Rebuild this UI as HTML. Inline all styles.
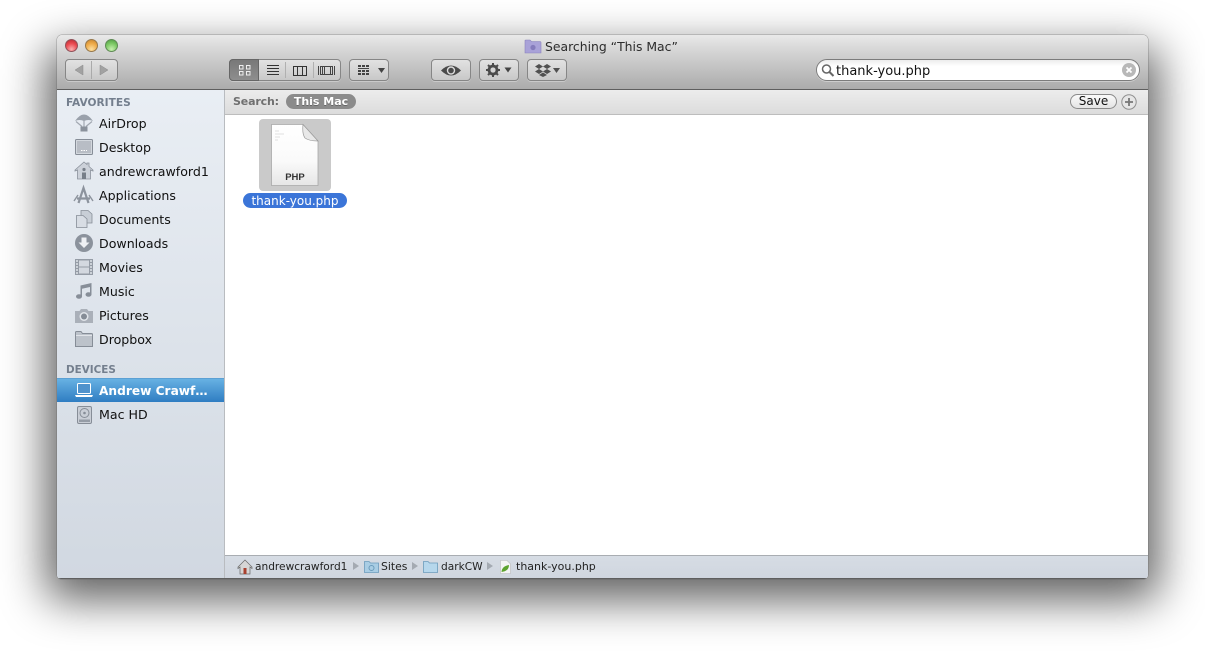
<!DOCTYPE html>
<html><head><meta charset="utf-8">
<style>
*{box-sizing:border-box}
html,body{margin:0;padding:0;width:1205px;height:657px;overflow:hidden;background:#fff;font-family:"DejaVu Sans","Liberation Sans",sans-serif;color:#111}
.a{position:absolute}
#shadow{left:46px;top:48px;width:1113px;height:552px;border-radius:14px;background:rgba(0,0,0,.62);filter:blur(22px)}
#win{left:57px;top:35px;width:1091px;height:544px;border-radius:5px 5px 4px 4px;overflow:hidden;background:#fff;box-shadow:0 0 0 .5px rgba(90,90,90,.5)}
#tb{left:0;top:0;width:1091px;height:55px;background:linear-gradient(#e9e9e9,#d8d8d8 25%,#b4b4b4 85%,#acacac);border-bottom:1px solid #5e5e5e}
#side{left:0;top:55px;width:168px;height:489px;background:linear-gradient(#e9eef4,#d1d8e1);border-right:1px solid #b9bcc0}
#sb{left:168px;top:55px;width:923px;height:25px;background:linear-gradient(#ececec,#dcdcdc);border-bottom:1px solid #bdbdbd}
#status{left:168px;top:520px;width:923px;height:24px;background:linear-gradient(#d6dce4,#d0d6df);border-top:1px solid #a9adb2}
.dot{width:13px;height:13px;border-radius:50%;top:4px}
.btn{height:22px;top:24px;border:1px solid #868686;border-radius:4px;background:linear-gradient(#e2e2e2,#c8c8c8);box-shadow:0 1px 0 rgba(255,255,255,.3)}
.it{left:42px;font-size:12.6px;line-height:16px;white-space:nowrap;color:#111}
.h{left:9px;font-weight:bold;color:#747f8e;line-height:14px;white-space:nowrap}
svg{position:absolute;overflow:visible}
.st{font-size:11px;line-height:14px;top:525px;white-space:nowrap;color:#222}
</style></head><body>
<div class="a" id="shadow"></div>
<div class="a" id="win">
<div class="a" id="tb"></div>
<div class="a" id="side"></div>
<div class="a" id="sb"></div>
<div class="a" id="status"></div>
<div class="a" style="left:0;top:543px;width:1091px;height:1px;background:#5f5f5f"></div>

<div class="a dot" style="left:8px;background:radial-gradient(circle at 50% 85%,#fbb0b0,#ea4a50 55%,#b52a30);border:1px solid #90525a"></div>
<div class="a dot" style="left:28px;background:radial-gradient(circle at 50% 85%,#fde0a0,#eeaa48 55%,#c4822c);border:1px solid #96784c"></div>
<div class="a dot" style="left:48px;background:radial-gradient(circle at 50% 85%,#c8f0b0,#7cc864 55%,#4c9a40);border:1px solid #5f8a55"></div>

<svg style="left:468px;top:4px" width="16" height="14"><path d="M0 3V1.500Q0 1 1 1H5L6.500 2.500H15Q16 2.500 16 3.500V14H0Z" fill="#a9a2d8" stroke="#8a82bc" stroke-width=".6"/><circle cx="8" cy="8.500" r="2.600" fill="#857cbc"/></svg>
<div class="a" style="left:488px;top:4px;font-size:12.4px;line-height:16px;color:#2c2c2c;white-space:nowrap">Searching “This Mac”</div>

<!-- back/forward -->
<div class="a btn" style="left:8px;width:53px"></div>
<div class="a" style="left:34px;top:26px;width:1px;height:18px;background:#aaa"></div>
<svg style="left:17px;top:30px" width="40" height="11"><path d="M9 0V10L1 5Z M26 0V10L34 5Z" fill="#a2a2a2" stroke="#8c8c8c" stroke-width=".5"/></svg>

<!-- view switch -->
<div class="a btn" style="left:172px;width:112px"></div>
<div class="a" style="left:172px;top:24px;width:30px;height:22px;border-radius:4px 0 0 4px;background:linear-gradient(#787878,#8e8e8e);border:1px solid #666"></div>
<div class="a" style="left:228px;top:27px;width:1px;height:16px;background:#b0b0b0"></div>
<div class="a" style="left:256px;top:27px;width:1px;height:16px;background:#b0b0b0"></div>
<svg style="left:182px;top:30px" width="90" height="13" fill="none" stroke="#333">
 <g stroke="#eee"><rect x=".5" y=".5" width="3.500" height="3.500"/><rect x="7.500" y=".5" width="3.500" height="3.500"/><rect x=".5" y="6.500" width="3.500" height="3.500"/><rect x="7.500" y="6.500" width="3.500" height="3.500"/></g>
 <path d="M28 .5H40M28 3.500H40M28 6.500H40M28 9.500H40"/>
 <path d="M54.500 1.500H67.500V10.500H54.500ZM58.500 1.500V10.500M63.500 1.500V10.500"/>
 <path d="M81.500 1.500H93.500V9.500H81.500Z M79.500 1V10 M95.500 1V10 M83.500 2V9 M85.500 2V9 M91.500 2V9" stroke="#444"/>
</svg>

<!-- arrange -->
<div class="a btn" style="left:292px;width:40px"></div>
<svg style="left:301px;top:30px" width="26" height="11" fill="#444"><path d="M0 0h3v2H0zM4 0h3v2H4zM8 0h3v2H8z M0 3h11v1H0z M0 5h3v2H0zM4 5h3v2H4zM8 5h3v2H8z M0 8h3v2H0zM4 8h3v2H4zM8 8h3v2H8z"/><path d="M20 3h7L23.500 8z"/></svg>

<!-- quick look -->
<div class="a btn" style="left:374px;width:40px"></div>
<svg style="left:384px;top:29px" width="20" height="13"><path d="M0 6.500Q10 -3.500 20 6.500Q10 16.500 0 6.500Z" fill="#4a4a4a"/><circle cx="10" cy="6.500" r="4.200" fill="#dcdcdc"/><circle cx="10" cy="6.500" r="2.800" fill="#4a4a4a"/></svg>

<!-- gear -->
<div class="a btn" style="left:422px;width:40px"></div>
<svg style="left:429px;top:28px" width="32" height="14"><circle cx="7" cy="7" r="4.200" fill="none" stroke="#4a4a4a" stroke-width="2.400"/><path d="M7 0V14M0 7H14M2 2L12 12M12 2L2 12" stroke="#4a4a4a" stroke-width="2"/><circle cx="7" cy="7" r="2.600" fill="#d4d4d4"/><path d="M18.500 4.500h7L22 9.500z" fill="#444"/></svg>

<!-- dropbox -->
<div class="a btn" style="left:470px;width:40px"></div>
<svg style="left:478px;top:29px" width="30" height="13" fill="#505050"><path d="M4 0L8 2.500 4 5 0 2.500ZM12 0L16 2.500 12 5 8 2.500ZM4 5L8 7.500 4 10 0 7.500ZM12 5L16 7.500 12 10 8 7.500ZM8 8.500L12 11 8 13 4 11Z"/><path d="M18 4h7L21.500 9z"/></svg>

<!-- search -->
<div class="a" style="left:759px;top:24px;width:324px;height:22px;border-radius:11px;background:linear-gradient(#ececec,#fff 30%);border:1px solid #7c7c7c;box-shadow:0 1px 0 rgba(255,255,255,.35)"></div>
<svg style="left:764px;top:29px" width="14" height="14" fill="none" stroke="#666" stroke-width="1.500"><circle cx="5.500" cy="5" r="4"/><path d="M8.500 8L12.500 12" stroke-width="2"/></svg>
<div class="a" style="left:779px;top:28px;font-size:13px;line-height:16px;color:#111;white-space:nowrap;margin-top:1px">thank-you.php</div>
<svg style="left:1065px;top:28px" width="14" height="14"><circle cx="7" cy="7" r="7" fill="#b8b8b8"/><path d="M4.500 4.500L9.500 9.500M9.500 4.500L4.500 9.500" stroke="#fff" stroke-width="1.800"/></svg>

<!-- sidebar -->
<div class="a h" style="top:61px;font-size:10.6px">FAVORITES</div>
<div class="a it" style="top:81px">AirDrop</div>
<div class="a it" style="top:105px">Desktop</div>
<div class="a it" style="top:129px">andrewcrawford1</div>
<div class="a it" style="top:153px">Applications</div>
<div class="a it" style="top:177px">Documents</div>
<div class="a it" style="top:201px">Downloads</div>
<div class="a it" style="top:225px">Movies</div>
<div class="a it" style="top:249px">Music</div>
<div class="a it" style="top:273px">Pictures</div>
<div class="a it" style="top:297px">Dropbox</div>
<div class="a h" style="top:328px;font-size:10.4px">DEVICES</div>
<div class="a" style="left:0;top:343px;width:167px;height:24px;background:linear-gradient(#67b1e3,#2f7dc2);border-top:1px solid #5ba0d4"></div>
<div class="a it" style="top:348px;color:#fff;font-weight:bold;font-size:12.2px">Andrew Crawf…</div>
<div class="a it" style="top:372px">Mac HD</div>

<!-- sidebar icons -->
<svg style="left:18px;top:79px" width="18" height="18"><path d="M0 7Q9 -6 18 7Q13.500 5 9 7Q4.500 5 0 7Z" fill="#9aa1ab"/><path d="M1 7.500L7 12.500M17 7.500L11 12.500M9 7V12.500" stroke="#a2a8b1" stroke-width="1.200"/><rect x="5.500" y="12.500" width="7" height="5" fill="#8b929c"/></svg>
<svg style="left:18px;top:104px" width="18" height="16"><rect x=".5" y=".5" width="17" height="15" rx="1" fill="#d3d8de" stroke="#868d97"/><rect x="2" y="2" width="14" height="12" fill="#b8bdc5"/><path d="M6 11.500h6" stroke="#fff" stroke-dasharray="1.500 1"/></svg>
<svg style="left:18px;top:127px" width="18" height="17"><path d="M0 8L9 0 12 2.500V1H14V4.500L18 8V9L15.500 8V17H2.500V8L0 9Z" fill="#ccd1d9" stroke="#8a919b" stroke-width=".8"/><circle cx="9" cy="7.500" r="1.600" fill="#777e88"/><rect x="7" y="10.500" width="4" height="6.500" fill="#777e88"/></svg>
<svg style="left:17px;top:151px" width="19" height="18" fill="none" stroke="#8c939d" stroke-width="2.200"><path d="M4.500 17L9.500 2 14.500 17M3 12.500H16"/><path d="M0 15L4 9M19 15L15 9" stroke-width="1.400"/></svg>
<svg style="left:19px;top:175px" width="17" height="18"><path d="M5 .5H12L16 4V13H5Z" fill="#c8ced6" stroke="#868d97" stroke-width=".8"/><path d="M.5 5.500H7L11 9V17.500H.5Z" fill="#d8dde4" stroke="#868d97" stroke-width=".8"/></svg>
<svg style="left:18px;top:199px" width="18" height="18"><circle cx="9" cy="9" r="9" fill="#8b929c"/><path d="M6.500 3.500H11.500V8.500H14.500L9 14 3.500 8.500H6.500Z" fill="#eef0f3"/></svg>
<svg style="left:18px;top:224px" width="18" height="16"><rect width="18" height="16" fill="#959ca6"/><rect x="4" y="1.500" width="10" height="6" fill="#d3d8df"/><rect x="4" y="8.500" width="10" height="6" fill="#d3d8df"/><path d="M1 2h2M1 5h2M1 8h2M1 11h2M1 14h2M15 2h2M15 5h2M15 8h2M15 11h2M15 14h2" stroke="#dfe3e8" stroke-width="1.500"/></svg>
<svg style="left:19px;top:248px" width="16" height="16" fill="#878e98"><ellipse cx="3" cy="13.500" rx="3" ry="2.300"/><ellipse cx="12.500" cy="11.500" rx="3" ry="2.300"/><path d="M4.500 13.500V2.500L15.500 0V11.500H14V4L6 5.800V13.500Z"/></svg>
<svg style="left:18px;top:274px" width="18" height="14"><path d="M0 2H4.500L6 0H12L13.500 2H18V14H0Z" fill="#aab0b9"/><circle cx="9" cy="7.500" r="4.500" fill="#e1e5ea"/><circle cx="9" cy="7.500" r="3" fill="#858c96"/></svg>
<svg style="left:18px;top:296px" width="18" height="16"><path d="M.5 15.500V1.500Q.5 .5 1.500 .5H6L7.500 2.500H16.500Q17.500 2.500 17.500 3.500V15.500Z" style="fill:#bcc2ca" stroke="#868d97"/><path d="M1 4.500H17" stroke="#e0e3e8"/></svg>
<svg style="left:18px;top:348px" width="18" height="15"><rect x="2.500" y=".5" width="13" height="10" rx="1" fill="#4f92cc" stroke="#fff"/><path d="M0 12H18L17 14H1Z" fill="#fff"/></svg>
<svg style="left:20px;top:371px" width="15" height="18"><rect x=".5" y=".5" width="14" height="17" rx="1.500" fill="#c9ced6" stroke="#868d97"/><circle cx="7.500" cy="7" r="4.500" fill="none" stroke="#868d97"/><circle cx="7.500" cy="7" r="1.300" fill="#868d97"/><rect x="2" y="13.500" width="11" height="2.500" fill="#959ca6"/></svg>

<!-- search bar -->
<div class="a" style="left:176px;top:59px;font-size:11px;font-weight:bold;line-height:15px;color:#707070;letter-spacing:-.15px;white-space:nowrap">Search:</div>
<div class="a" style="left:229px;top:59px;width:70px;height:15px;border-radius:8px;background:#8b8b8b;color:#fff;font-size:11px;font-weight:bold;line-height:15px;text-align:center;text-shadow:0 1px 0 #666;white-space:nowrap">This Mac</div>
<div class="a" style="left:1013px;top:59px;width:47px;height:15px;border-radius:8px;border:1px solid #8a8a8a;background:linear-gradient(#fafafa,#e4e4e4);font-size:12px;line-height:13px;text-align:center;color:#111">Save</div>
<svg style="left:1064px;top:59px" width="16" height="16"><circle cx="8" cy="8" r="7.200" fill="#e6e6e6" stroke="#8f8f8f"/><path d="M8 4V12M4 8H12" stroke="#777" stroke-width="1.800"/></svg>

<!-- file -->
<div class="a" style="left:202px;top:84px;width:72px;height:72px;border-radius:4px;background:#cacaca"></div>
<svg style="left:214px;top:89px" width="48" height="62"><defs><linearGradient id="p" x1="0" y1="0" x2="0" y2="1"><stop offset="0" stop-color="#fff"/><stop offset=".6" stop-color="#fafafa"/><stop offset="1" stop-color="#e6e6e6"/></linearGradient></defs><path d="M.5 .5H32L47 17V61.500H.5Z" fill="url(#p)" stroke="#a8a8a8" stroke-width=".8"/><path d="M32 .5L47 17Q38 17 34 14Q31 10 32 .5Z" fill="#e8e8e8" stroke="#9a9a9a" stroke-width=".7"/><path d="M4 7h4M4 10h9M4 13h5M4 16h3" stroke="#e0e0e0"/></svg>
<div class="a" style="left:214px;top:137px;width:48px;text-align:center;font:bold 9.500px/12px 'Liberation Sans',sans-serif;color:#333">PHP</div>
<div class="a" style="left:186px;top:158px;width:104px;height:15px;border-radius:8px;background:#3b75d8;color:#fff;font-size:12px;line-height:16px;text-align:center;white-space:nowrap">thank-you.php</div>

<!-- status -->
<svg style="left:181px;top:525px" width="14" height="14"><path d="M0 7L7 0 14 7V8.500L12 7V14H2V7L0 8.500Z" fill="#d6d6d6" stroke="#666" stroke-width=".7"/><rect x="5.500" y="8" width="3" height="6" fill="#a8402f"/></svg>
<div class="a st" style="left:198px;font-size:10.600px">andrewcrawford1</div>
<svg style="left:296px;top:527px" width="6" height="8"><path d="M0 0L6 4 0 8Z" fill="#a4aab2"/></svg>
<svg style="left:307px;top:525px" width="15" height="13"><path d="M.5 12.500V1.500H5L6.500 3H14.500V12.500Z" fill="#a9cde4" stroke="#6c9cbc" stroke-width=".8"/><circle cx="7.500" cy="8" r="2.500" fill="none" stroke="#6c9cbc"/></svg>
<div class="a st" style="left:324px;font-size:10.800px">Sites</div>
<svg style="left:355px;top:527px" width="6" height="8"><path d="M0 0L6 4 0 8Z" fill="#a4aab2"/></svg>
<svg style="left:366px;top:525px" width="15" height="13"><path d="M.5 12.500V1.500H5L6.500 3H14.500V12.500Z" fill="#b6d7ec" stroke="#6c9cbc" stroke-width=".8"/></svg>
<div class="a st" style="left:384px;font-size:10.600px">darkCW</div>
<svg style="left:430px;top:527px" width="6" height="8"><path d="M0 0L6 4 0 8Z" fill="#a4aab2"/></svg>
<svg style="left:443px;top:525px" width="11" height="14"><path d="M.5 .5H7L10.500 4V13.500H.5Z" fill="#f4f4f4" stroke="#bbb" stroke-width=".6"/><path d="M1.500 12Q2 6 9 5Q9 11 1.500 12Z" fill="#5da32e"/></svg>
<div class="a st" style="left:459px">thank-you.php</div>
</div>
</body></html>
